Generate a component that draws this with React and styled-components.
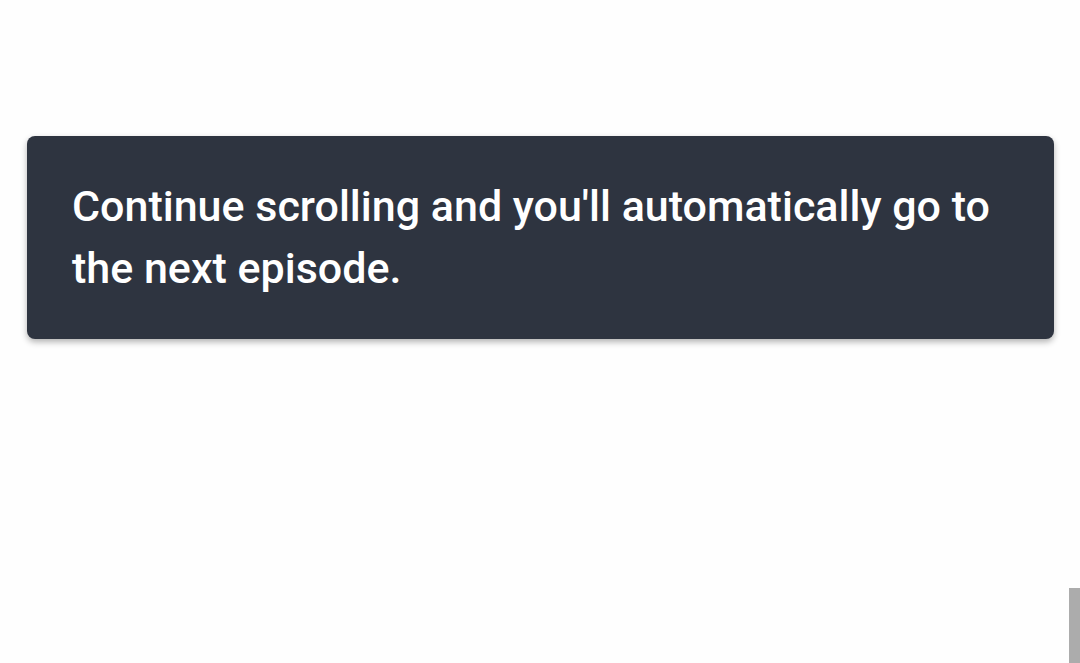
import React from 'react';
import styled, { createGlobalStyle } from 'styled-components';

const GlobalStyle = createGlobalStyle`
  html, body {
    margin: 0;
    padding: 0;
    background: #fefefe;
    font-family: Roboto, "Liberation Sans", sans-serif;
  }
`;

const Page = styled.div`
  position: relative;
  height: 663px;
  overflow: hidden;
  padding: 136px 26px 0 27px;
  box-sizing: border-box;
`;

const Notice = styled.div`
  background: #2e3440;
  border-radius: 8px;
  box-shadow: 0 3px 6px rgba(0, 0, 0, 0.3);
  padding: 39px 45px 40px;
  color: #ffffff;
  font-size: 43px;
  font-weight: 500;
  line-height: 62px;
`;

const ScrollThumb = styled.div`
  position: absolute;
  right: 0;
  bottom: 0;
  width: 11px;
  height: 75px;
  background: #acacac;
`;

const App = () => {
    return (
        <Page>
            <GlobalStyle />
            <Notice>
                Continue scrolling and you'll automatically go to the next episode.
            </Notice>
            <ScrollThumb />
        </Page>
    );
};

export default App;
